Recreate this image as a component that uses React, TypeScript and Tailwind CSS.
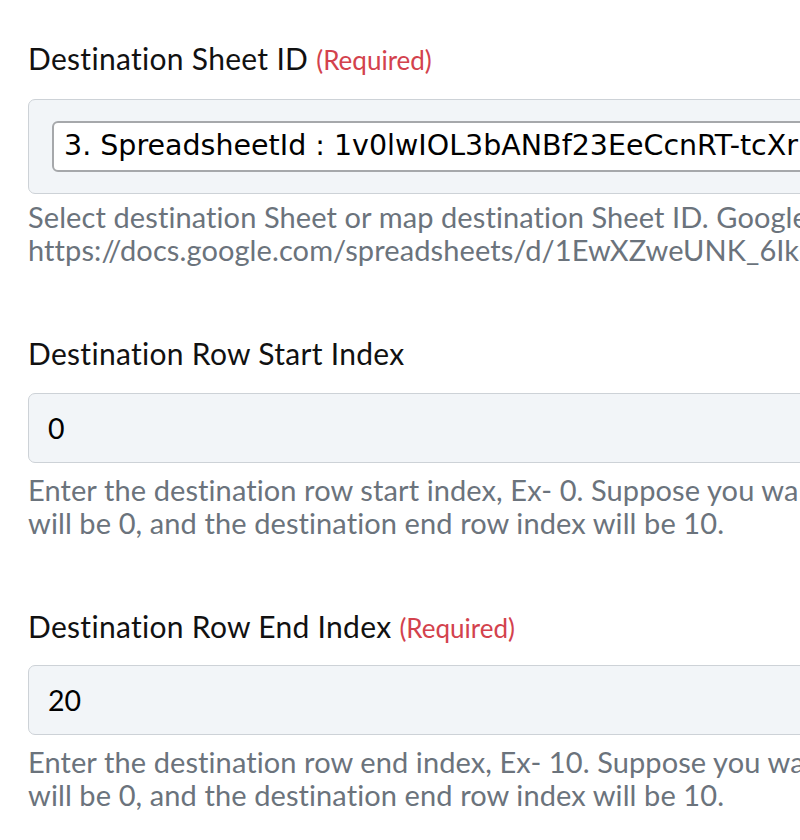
const fields = [
  {
    label: "Destination Row Start Index",
    required: false,
    value: "0",
    gap: "mt-[69px]",
    inputGap: "mt-[22px]",
    help: [
      "Enter the destination row start index, Ex- 0. Suppose you want to write data from row 1 to 10, the destination start row index",
      "will be 0, and the destination end row index will be 10.",
    ],
  },
  {
    label: "Destination Row End Index",
    required: true,
    value: "20",
    gap: "mt-[69px]",
    inputGap: "mt-[19px]",
    help: [
      "Enter the destination row end index, Ex- 10. Suppose you want to write data from row 1 to 10, the destination start row index",
      "will be 0, and the destination end row index will be 10.",
    ],
  },
];

const Label = ({ text, required }: { text: string; required: boolean }) => (
  <div className="flex items-baseline gap-[8px] text-[30px] leading-[36px] tracking-[0.3px] text-[#111]">
    <span>{text}</span>
    {required && <span className="text-[26px] tracking-normal text-[#d3424d]">(Required)</span>}
  </div>
);

const Help = ({ lines, className }: { lines: string[]; className: string }) => (
  <div className={`${className} text-[29px] leading-[33px] tracking-[0.1px] text-[#6b737c] whitespace-nowrap`}>
    {lines.map((l) => (
      <div key={l}>{l}</div>
    ))}
  </div>
);

export default function App() {
  return (
    <div className="w-[800px] h-[840px] overflow-hidden bg-white" style={{ fontFamily: "Lato, 'Noto Sans', sans-serif" }}>
      <div className="w-[1400px] pl-[28px] pt-[40px] flex flex-col">
        <section>
          <Label text="Destination Sheet ID" required />
          <div className="mt-[21px] h-[95px] rounded-[7px] border border-[#cdd2d7] bg-[#f2f5f8] pl-[23px] pt-[21px]">
            <div
              className="h-[51px] rounded-[6px] border-2 border-[#a6a8ab] bg-white pl-[10px] flex items-center text-[28.5px] text-black whitespace-nowrap"
              style={{ fontFamily: "'DejaVu Sans', Verdana, sans-serif" }}
            >
              3. SpreadsheetId : 1v0lwIOL3bANBf23EeCcnRT-tcXrHxpWk2oTqYfZc8aQ
            </div>
          </div>
          <Help
            className="mt-[6px]"
            lines={[
              "Select destination Sheet or map destination Sheet ID. Google Sheet ID can be found in the URL of the sheet, Ex-",
              "https://docs.google.com/spreadsheets/d/1EwXZweUNK_6IkSheetId/edit#gid=0",
            ]}
          />
        </section>
        {fields.map((f) => (
          <section key={f.label} className={f.gap}>
            <Label text={f.label} required={f.required} />
            <div
              className={`${f.inputGap} h-[70px] rounded-[7px] border border-[#cdd2d7] bg-[#f2f5f8] pl-[19px] flex items-center text-[28.5px] text-black`}
            >
              {f.value}
            </div>
            <Help className="mt-[10px]" lines={f.help} />
          </section>
        ))}
      </div>
    </div>
  );
}
